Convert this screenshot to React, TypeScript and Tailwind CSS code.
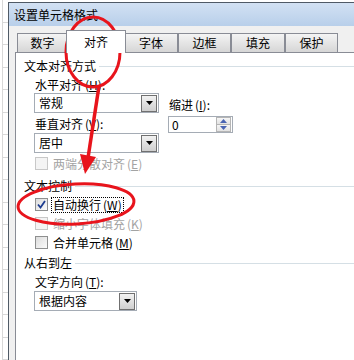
import type { ReactNode } from 'react';

const font = { fontFamily: '"Noto Sans CJK SC", "Noto Sans", sans-serif' };

function GroupLabel({ text }: { text: string }) {
  return (
    <div className="flex h-[14px] items-center">
      <span className="text-[12px] leading-none text-black">{text}</span>
      <div className="ml-[3px] h-px flex-1 bg-[#d5dfe5]" />
    </div>
  );
}

function Label({ children }: { children: ReactNode }) {
  return <div className="flex h-[14px] items-center pl-px text-[12px] leading-none text-black">{children}</div>;
}

function Dropdown({ value, width }: { value: string; width: string }) {
  return (
    <div className={`flex h-[20px] items-center border border-[#a5acb5] bg-white ${width}`}>
      <span className="flex-1 pl-[4px] text-[12px] leading-none text-black">{value}</span>
      <div className="mr-px flex h-[17px] w-[16px] items-center justify-center border border-[#707070] bg-gradient-to-b from-[#f2f2f2] to-[#cfcfcf]">
        <svg width="7" height="4" viewBox="0 0 7 4">
          <path d="M0 0h7L3.5 4z" fill="#000" />
        </svg>
      </div>
    </div>
  );
}

function Checkbox({ label, checked, disabled, focused }: { label: ReactNode; checked?: boolean; disabled?: boolean; focused?: boolean }) {
  return (
    <div className="flex h-[15px] items-center pl-[11px]">
      <div
        className={`flex h-[13px] w-[13px] items-center justify-center border ${
          disabled ? 'border-[#c8c8c8] bg-[#f4f4f4]' : 'border-[#8e8f8f] bg-gradient-to-br from-[#dcdcdc] to-[#fbfbfb]'
        }`}
      >
        {checked && (
          <svg width="9" height="9" viewBox="0 0 9 9">
            <path d="M1 4.5 L3.5 7.5 L8 1" fill="none" stroke="#1d3c8f" strokeWidth="1.8" />
          </svg>
        )}
      </div>
      <span
        className={`ml-[3px] px-px text-[12px] leading-none ${disabled ? 'text-[#a3a3a3]' : 'text-black'} ${
          focused ? 'border border-dotted border-black py-[1px]' : 'border border-transparent py-[1px]'
        }`}
      >
        {label}
      </span>
    </div>
  );
}

export default function App() {
  return (
    <div className="relative flex h-[360px] w-[354px] overflow-hidden bg-white pt-[2px]" style={font}>
      {/* excel grid behind the dialog */}
      <div className="relative w-[6px] border-l border-[#d8d8d8] ml-[2px] -mt-[2px] flex flex-col">
        {Array.from({ length: 16 }).map((_, i) => (
          <div key={i} className="h-[24px] border-b border-[#d8d8d8]" />
        ))}
      </div>

      <div className="flex flex-1 flex-col border-l border-t border-[#4f5a66] bg-[#f0f0f0]">
        <div className="flex h-[23px] items-center bg-gradient-to-b from-[#d2e1f3] to-[#b8cfea] pl-[5px]">
          <span className="text-[12px] leading-none text-black">设置单元格格式</span>
        </div>

        <div className="flex flex-1 flex-col pl-[6px] pt-[4px]">
          <div className="flex h-[22px] items-end pl-[2px]">
            <div className="flex h-[19px] w-[51px] items-center justify-center border border-b-0 border-[#898c95] bg-gradient-to-b from-[#f4f4f4] to-[#d6d6d6] text-[12px] leading-none">
              数字
            </div>
            <div className="relative z-10 -mx-[2px] -mb-px flex h-[23px] w-[60px] items-center justify-center border border-b-0 border-[#898c95] bg-white text-[12px] leading-none">
              对齐
            </div>
            <div className="flex h-[19px] w-[54px] items-center justify-center border border-b-0 border-[#898c95] bg-gradient-to-b from-[#f4f4f4] to-[#d6d6d6] text-[12px] leading-none">
              字体
            </div>
            <div className="flex h-[19px] w-[53px] items-center justify-center border border-b-0 border-[#898c95] bg-gradient-to-b from-[#f4f4f4] to-[#d6d6d6] text-[12px] leading-none">
              边框
            </div>
            <div className="flex h-[19px] w-[54px] items-center justify-center border border-b-0 border-[#898c95] bg-gradient-to-b from-[#f4f4f4] to-[#d6d6d6] text-[12px] leading-none">
              填充
            </div>
            <div className="flex h-[19px] w-[53px] items-center justify-center border border-b-0 border-[#898c95] bg-gradient-to-b from-[#f4f4f4] to-[#d6d6d6] text-[12px] leading-none">
              保护
            </div>
          </div>

          <div className="flex flex-1 flex-col border-l border-t border-[#898c95] bg-white pl-[8px] pt-[6px]">
            <GroupLabel text="文本对齐方式" />
            <div className="flex">
              <div className="flex flex-col pl-[10px]">
                <div className="mt-[5px]">
                  <Label>
                    水平对齐<span className="ml-[2px]">(<u>H</u>):</span>
                  </Label>
                </div>
                <div className="mt-[1px]">
                  <Dropdown value="常规" width="w-[125px]" />
                </div>
                <div className="mt-[4px]">
                  <Label>
                    垂直对齐<span className="ml-[2px]">(<u>V</u>):</span>
                  </Label>
                </div>
                <div className="mt-[2px]">
                  <Dropdown value="居中" width="w-[125px]" />
                </div>
              </div>
              <div className="ml-[9px] flex flex-col">
                <div className="mt-[25px]">
                  <Label>
                    <span className="text-[#000]">缩进</span>
                    <span className="ml-[2px]">(<u>I</u>):</span>
                  </Label>
                </div>
                <div className="mt-[4px] flex h-[17px] w-[65px] items-center border border-[#a5acb5] bg-white">
                  <span className="flex-1 pl-[3px] text-[12px] leading-none">0</span>
                  <div className="mr-px flex h-[15px] w-[15px] flex-col">
                    <div className="flex flex-1 items-center justify-center border border-[#b5b5b5] bg-gradient-to-b from-[#f6f6f6] to-[#e2e2e2]">
                      <svg width="7" height="4" viewBox="0 0 7 4">
                        <path d="M3.5 0L7 4H0z" fill="#4a64b2" />
                      </svg>
                    </div>
                    <div className="flex flex-1 items-center justify-center border border-t-0 border-[#b5b5b5] bg-gradient-to-b from-[#f6f6f6] to-[#e2e2e2]">
                      <svg width="7" height="4" viewBox="0 0 7 4">
                        <path d="M0 0h7L3.5 4z" fill="#4a64b2" />
                      </svg>
                    </div>
                  </div>
                </div>
              </div>
            </div>

            <div className="mt-[3px]">
              <Checkbox
                disabled
                label={
                  <>
                    两端分散对齐<span className="ml-[2px]">(<u>E</u>)</span>
                  </>
                }
              />
            </div>

            <div className="mt-[8px]">
              <GroupLabel text="文本控制" />
            </div>
            <div className="mt-[4px] flex flex-col gap-[4px]">
              <Checkbox
                checked
                focused
                label={
                  <>
                    自动换行<span className="ml-[2px]">(<u>W</u>)</span>
                  </>
                }
              />
              <Checkbox
                disabled
                label={
                  <>
                    缩小字体填充<span className="ml-[2px]">(<u>K</u>)</span>
                  </>
                }
              />
              <Checkbox
                label={
                  <>
                    合并单元格<span className="ml-[2px]">(<u>M</u>)</span>
                  </>
                }
              />
            </div>

            <div className="mt-[6px]">
              <GroupLabel text="从右到左" />
            </div>
            <div className="mt-[5px] pl-[10px]">
              <Label>
                文字方向<span className="ml-[2px]">(<u>T</u>):</span>
              </Label>
            </div>
            <div className="mt-[2px] pl-[10px]">
              <Dropdown value="根据内容" width="w-[103px]" />
            </div>
          </div>
        </div>
      </div>

      {/* red annotations */}
      <svg className="pointer-events-none absolute left-0 top-0" width="354" height="360" viewBox="0 0 354 360">
        <ellipse cx="93" cy="52" rx="27" ry="35" fill="none" stroke="#e8141c" strokeWidth="3" />
        <path d="M99 86 L88 158" stroke="#e8141c" strokeWidth="3.5" fill="none" />
        <path d="M80 154 L96 157 L85 174 Z" fill="#e8141c" />
        <ellipse cx="76" cy="204" rx="58" ry="20" fill="none" stroke="#e8141c" strokeWidth="3" transform="rotate(-3 76 204)" />
      </svg>
    </div>
  );
}
